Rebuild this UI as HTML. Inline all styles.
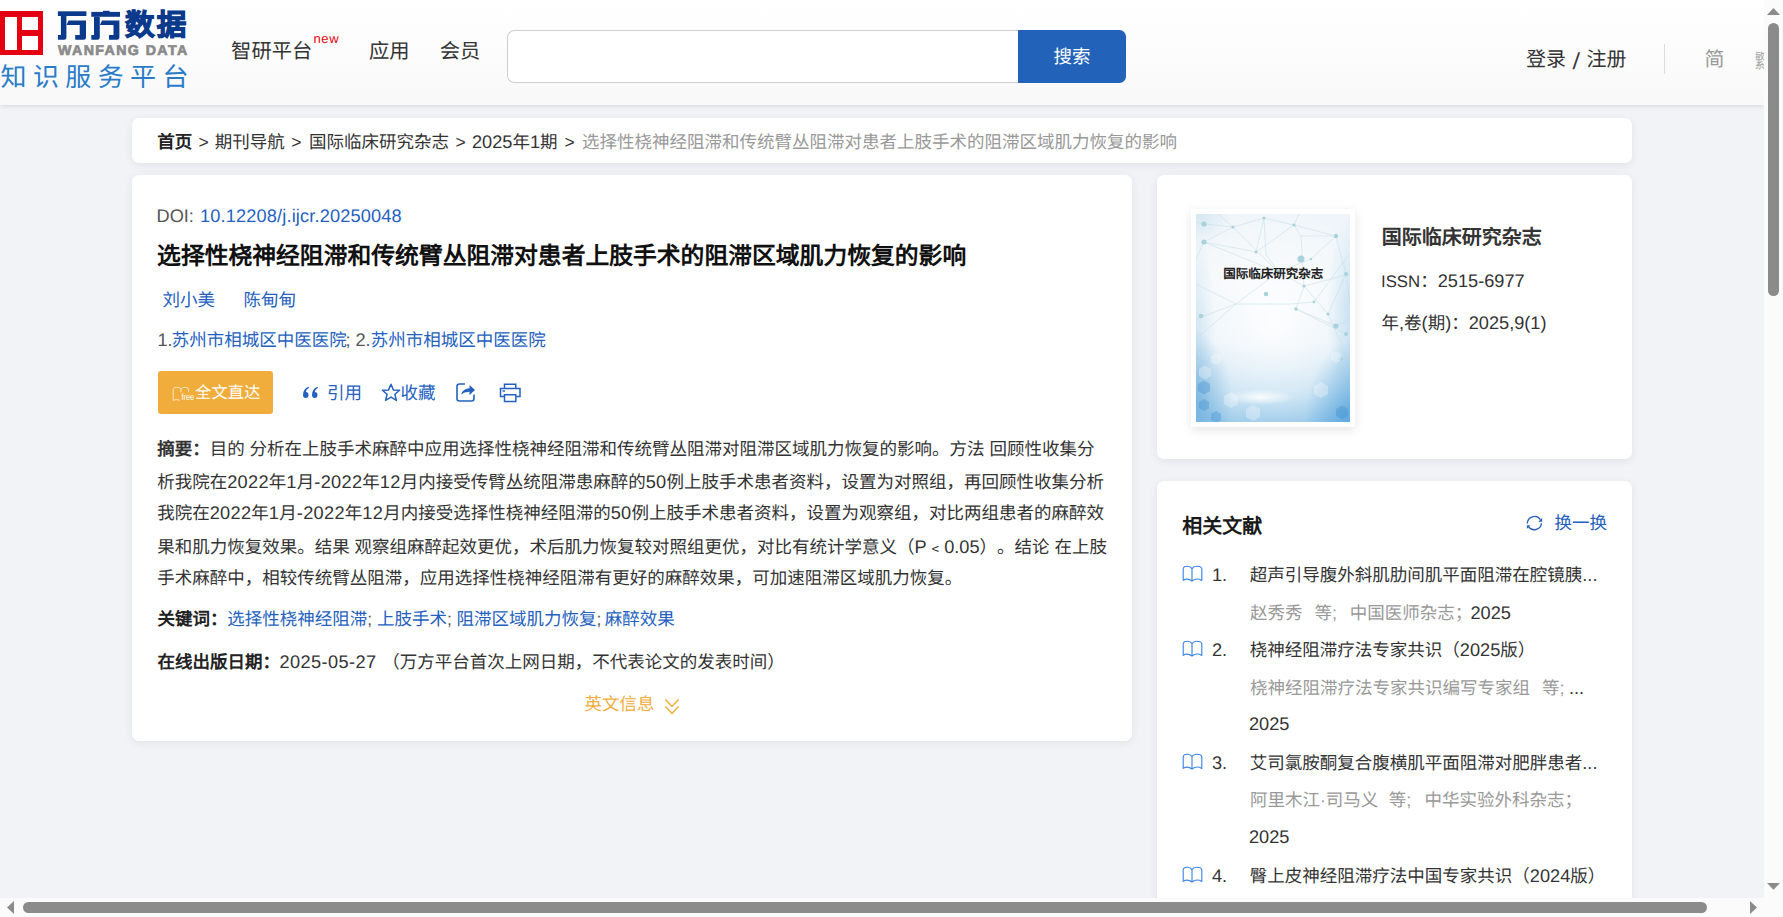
<!DOCTYPE html>
<html lang="zh-CN"><head><meta charset="utf-8"><title>万方数据</title>
<style>
*{margin:0;padding:0;box-sizing:border-box}
html,body{width:1783px;height:917px;overflow:hidden;background:#fafafa}
body{font-family:"Liberation Sans",sans-serif;color:#333;position:relative;text-rendering:geometricPrecision;text-spacing-trim:space-all}
.ab{position:absolute;white-space:nowrap}
.l{font-size:1.04em}
.d{font-size:1.04em;letter-spacing:0.3px}
#vp{position:absolute;left:0;top:0;width:1764px;height:898px;overflow:hidden;background:#f2f3f6}
#hdr{position:absolute;left:0;top:0;width:1764px;height:105px;background:linear-gradient(#ffffff 0%,#fcfcfc 50%,#f8f8f8 100%);box-shadow:0 1px 5px rgba(0,0,0,.12)}
.card{position:absolute;background:#fff;border-radius:7px;box-shadow:0 2px 10px rgba(0,0,0,.07)}
.blue{color:#2461c0}
.gray{color:#999}
</style></head><body>
<div id="vp">
<div id="hdr">
<div class="ab" style="left:0;top:11.2px;width:43.2px;height:43.8px;background:#e50011"></div>
<div class="ab" style="left:5px;top:16.8px;width:12.4px;height:33.1px;background:#fff"></div>
<div class="ab" style="left:22.4px;top:16.8px;width:15.7px;height:13.5px;background:#fff"></div>
<div class="ab" style="left:22.4px;top:35.9px;width:15.7px;height:14px;background:#fff"></div>
</div>
<svg class="ab" style="left:55px;top:8px" width="70" height="36" viewBox="0 0 70 36"><g fill="#0b3a8c"><path d="M2.9 3.3 H31.4 V8 H2.9 Z"/><path d="M5.9 8 H11.4 V29.5 Q11.4 31.8 9 31.8 H2.9 V27.1 H5.9 Z"/><path d="M13.6 12.6 H31 V29.5 Q31 31.8 28.6 31.8 H20.2 V27.1 H24.7 V16.9 H11.5 Z"/><path d="M36.3 3.9 H65 V8.8 H36.3 Z"/><path d="M47.9 2.8 H54.6 V4.5 H47.9 Z"/><path d="M39 8.8 H44.8 V29.5 Q44.8 31.8 42.4 31.8 H36.3 V27.1 H39 Z"/><path d="M47 12.6 H64.4 V29.5 Q64.4 31.8 62 31.8 H54 V27.1 H58.5 V16.9 H44.9 Z"/></g></svg>
<div class="ab" style="left:125.00px;top:4.20px;font-size:29.5px;line-height:44px;color:#0b3a8c;font-weight:900;letter-spacing:2.2px;-webkit-text-stroke:1.1px #0b3a8c">数据</div>
<div class="ab" style="left:58.00px;top:43.00px;font-size:14.2px;line-height:16px;color:#8a8a8a;font-weight:bold;letter-spacing:1.4px;-webkit-text-stroke:0.7px #8a8a8a">WANFANG DATA</div>
<div class="ab" style="left:0.50px;top:58.30px;font-size:26px;line-height:39px;color:#2a7cc8;font-weight:normal;letter-spacing:6.4px">知识服务平台</div>
<div class="ab" style="left:231.10px;top:36.50px;font-size:20.3px;line-height:30px;color:#333;font-weight:normal;">智研平台</div>
<div class="ab" style="left:313.50px;top:30.80px;font-size:13px;line-height:16px;color:#e60012;font-weight:normal;letter-spacing:0.6px">new</div>
<div class="ab" style="left:369.00px;top:36.50px;font-size:20.3px;line-height:30px;color:#333;font-weight:normal;">应用</div>
<div class="ab" style="left:439.70px;top:36.50px;font-size:20.3px;line-height:30px;color:#333;font-weight:normal;">会员</div>
<div class="ab" style="left:507px;top:30px;width:540px;height:53px;background:#fff;border:1px solid #cfcfcf;border-right:none;border-radius:7.5px 0 0 7.5px"></div>
<div class="ab" style="left:1018px;top:30px;width:108px;height:53px;background:#2362b9;border-radius:0 6.5px 6.5px 0"></div>
<div class="ab" style="left:1053.60px;top:43.20px;font-size:18.5px;line-height:28px;color:#fff;font-weight:normal;">搜索</div>
<div class="ab" style="left:1526.10px;top:45.30px;font-size:20px;line-height:30px;color:#333;font-weight:normal;">登录</div>
<div class="ab" style="left:1573.20px;top:44.20px;font-size:23px;line-height:34px;color:#333;font-weight:normal;transform:skewX(-4deg)">/</div>
<div class="ab" style="left:1586.40px;top:45.30px;font-size:20px;line-height:30px;color:#333;font-weight:normal;">注册</div>
<div class="ab" style="left:1664px;top:44px;width:1px;height:30px;background:#dcdcdc"></div>
<div class="ab" style="left:1704.50px;top:45.00px;font-size:20px;line-height:30px;color:#999;font-weight:normal;">简</div>
<div class="ab" style="left:1754.50px;top:46.50px;font-size:20px;line-height:30px;color:#aaa;font-weight:normal;transform:scaleX(0.5);transform-origin:0 0">繁</div>
<div class="card" style="left:132px;top:118px;width:1500px;height:44.7px"></div>
<div class="ab" style="left:157.20px;top:128.50px;font-size:17.5px;line-height:26px;color:#222;font-weight:bold;">首页</div>
<div class="ab" style="left:198.50px;top:128.50px;font-size:17.5px;line-height:26px;color:#333;font-weight:normal;">&gt;</div>
<div class="ab" style="left:291.20px;top:128.50px;font-size:17.5px;line-height:26px;color:#333;font-weight:normal;">&gt;</div>
<div class="ab" style="left:455.50px;top:128.50px;font-size:17.5px;line-height:26px;color:#333;font-weight:normal;">&gt;</div>
<div class="ab" style="left:564.50px;top:128.50px;font-size:17.5px;line-height:26px;color:#333;font-weight:normal;">&gt;</div>
<div class="ab" style="left:214.80px;top:128.50px;font-size:17.5px;line-height:26px;color:#333;font-weight:normal;">期刊导航</div>
<div class="ab" style="left:309.10px;top:128.50px;font-size:17.5px;line-height:26px;color:#333;font-weight:normal;">国际临床研究杂志</div>
<div class="ab" style="left:472.00px;top:128.50px;font-size:17.5px;line-height:26px;color:#333;font-weight:normal;"><span class="l">2025</span>年<span class="l">1</span>期</div>
<div class="ab" style="left:582.00px;top:128.50px;font-size:17.5px;line-height:26px;color:#999;font-weight:normal;">选择性桡神经阻滞和传统臂丛阻滞对患者上肢手术的阻滞区域肌力恢复的影响</div>
<div class="card" style="left:132px;top:175px;width:1000.3px;height:566px"></div>
<div class="ab" style="left:156.50px;top:202.50px;font-size:17.5px;line-height:26px;color:#555;font-weight:normal;"><span class="l">DOI:</span></div>
<div class="ab" style="left:200.00px;top:202.50px;font-size:17.5px;line-height:26px;color:#2461c0;font-weight:normal;"><span class="l" style="letter-spacing:0.15px">10.12208/j.ijcr.20250048</span></div>
<div class="ab" style="left:157.10px;top:239.00px;font-size:23.8px;line-height:36px;color:#111;font-weight:bold;">选择性桡神经阻滞和传统臂丛阻滞对患者上肢手术的阻滞区域肌力恢复的影响</div>
<div class="ab" style="left:162.40px;top:286.50px;font-size:17.5px;line-height:26px;color:#2461c0;font-weight:normal;">刘小美</div>
<div class="ab" style="left:243.60px;top:286.50px;font-size:17.5px;line-height:26px;color:#2461c0;font-weight:normal;">陈甸甸</div>
<div class="ab" style="left:157.50px;top:327.00px;font-size:17.5px;line-height:26px;color:#555;font-weight:normal;"><span class="l">1.</span></div>
<div class="ab" style="left:171.70px;top:327.00px;font-size:17.5px;line-height:26px;color:#2461c0;font-weight:normal;">苏州市相城区中医医院</div>
<div class="ab" style="left:345.50px;top:327.00px;font-size:17.5px;line-height:26px;color:#555;font-weight:normal;"><span class="l">;</span></div>
<div class="ab" style="left:355.50px;top:327.00px;font-size:17.5px;line-height:26px;color:#555;font-weight:normal;"><span class="l">2.</span></div>
<div class="ab" style="left:370.70px;top:327.00px;font-size:17.5px;line-height:26px;color:#2461c0;font-weight:normal;">苏州市相城区中医医院</div>
<div class="ab" style="left:158.3px;top:371.1px;width:114.4px;height:42.6px;background:#f0ad3b;border-radius:3px"></div>
<div class="ab" style="left:195.10px;top:381.20px;font-size:16.3px;line-height:24px;color:#fff;font-weight:normal;">全文直达</div>
<div class="ab" style="left:327.10px;top:379.60px;font-size:17.5px;line-height:26px;color:#2461c0;font-weight:normal;">引用</div>
<div class="ab" style="left:400.40px;top:379.60px;font-size:17.5px;line-height:26px;color:#2461c0;font-weight:normal;">收藏</div>
<div class="ab" style="left:157.20px;top:435.80px;font-size:17.5px;line-height:26px;color:#333;font-weight:normal;"><b>摘要：</b>目的 分析在上肢手术麻醉中应用选择性桡神经阻滞和传统臂丛阻滞对阻滞区域肌力恢复的影响。方法 回顾性收集分</div>
<div class="ab" style="left:157.20px;top:468.50px;font-size:17.5px;line-height:26px;color:#333;font-weight:normal;">析我院在<span class="d">2022</span>年<span class="d">1</span>月<span class="d">-2022</span>年<span class="d">12</span>月内接受传臂丛统阻滞患麻醉的<span class="d">50</span>例上肢手术患者资料，设置为对照组，再回顾性收集分析</div>
<div class="ab" style="left:157.20px;top:499.90px;font-size:17.5px;line-height:26px;color:#333;font-weight:normal;">我院在<span class="d">2022</span>年<span class="d">1</span>月<span class="d">-2022</span>年<span class="d">12</span>月内接受选择性桡神经阻滞的<span class="d">50</span>例上肢手术患者资料，设置为观察组，对比两组患者的麻醉效</div>
<div class="ab" style="left:157.20px;top:533.80px;font-size:17.5px;line-height:26px;color:#333;font-weight:normal;">果和肌力恢复效果。结果 观察组麻醉起效更优，术后肌力恢复较对照组更优，对比有统计学意义（<span class="l">P</span>﹤<span class="l">0.05</span>）。结论 在上肢</div>
<div class="ab" style="left:157.20px;top:565.10px;font-size:17.5px;line-height:26px;color:#333;font-weight:normal;">手术麻醉中，相较传统臂丛阻滞，应用选择性桡神经阻滞有更好的麻醉效果，可加速阻滞区域肌力恢复。</div>
<div class="ab" style="left:157.40px;top:605.90px;font-size:17.5px;line-height:26px;color:#222;font-weight:normal;"><b>关键词：</b></div>
<div class="ab" style="left:227.20px;top:605.90px;font-size:17.5px;line-height:26px;color:#2461c0;font-weight:normal;">选择性桡神经阻滞<span style="color:#555">;</span></div>
<div class="ab" style="left:377.00px;top:605.90px;font-size:17.5px;line-height:26px;color:#2461c0;font-weight:normal;">上肢手术<span style="color:#555">;</span></div>
<div class="ab" style="left:456.50px;top:605.90px;font-size:17.5px;line-height:26px;color:#2461c0;font-weight:normal;">阻滞区域肌力恢复<span style="color:#555">;</span></div>
<div class="ab" style="left:604.80px;top:605.90px;font-size:17.5px;line-height:26px;color:#2461c0;font-weight:normal;">麻醉效果</div>
<div class="ab" style="left:157.40px;top:648.80px;font-size:17.5px;line-height:26px;color:#222;font-weight:normal;"><b>在线出版日期：</b></div>
<div class="ab" style="left:279.50px;top:648.80px;font-size:17.5px;line-height:26px;color:#333;font-weight:normal;"><span class="l" style="letter-spacing:0.4px">2025-05-27</span></div>
<div class="ab" style="left:377.50px;top:648.80px;font-size:17.5px;line-height:26px;color:#333;font-weight:normal;">&nbsp;（万方平台首次上网日期，不代表论文的发表时间）</div>
<div class="ab" style="left:584.40px;top:691.10px;font-size:17.5px;line-height:26px;color:#f0ad3b;font-weight:normal;">英文信息</div>
<div class="card" style="left:1156.7px;top:175px;width:475.3px;height:284.3px"></div>
<div class="ab" style="left:1191px;top:208.6px;width:164.4px;height:218.2px;background:#fff;box-shadow:0 3px 10px rgba(0,0,0,.10)"></div>
<div class="ab" style="left:1196.4px;top:213.5px;width:154.1px;height:208.4px;overflow:hidden;background:
radial-gradient(ellipse 35px 8px at 42% 88%, rgba(255,255,255,.9), rgba(255,255,255,0)),
radial-gradient(ellipse 55px 90px at 106% 102%, rgba(60,150,215,.75), rgba(60,150,215,0)),
radial-gradient(ellipse 45px 70px at -6% 88%, rgba(70,150,210,.62), rgba(70,150,210,0)),
radial-gradient(ellipse 35px 30px at 0% 0%, rgba(160,205,225,.35), rgba(160,205,225,0)),
radial-gradient(ellipse 26px 100px at 102% 48%, rgba(140,195,230,.45), rgba(140,195,230,0)),
radial-gradient(ellipse 22px 100px at -2% 55%, rgba(150,200,230,.38), rgba(150,200,230,0)),
radial-gradient(ellipse 110px 120px at 50% 52%, rgba(255,255,255,.85), rgba(255,255,255,0)),
linear-gradient(#eff5fa 0%,#f3f7fa 35%,#e6f0f8 62%,#bddcf0 86%,#95c7e9 100%)">
<svg width="154" height="209" style="position:absolute;left:0;top:0" viewBox="0 0 154 209">
<g stroke="#bfdde3" stroke-width="0.55" fill="none" opacity="0.85">
<path d="M0 8 L8 10 L37 13 L68 4 L98 11 L140 22 L150 60 L132 100 L150 140"/>
<path d="M8 28 L37 13 L82 58 L108 72 L132 100 M118 88 L146 50 M146 50 L154 40"/>
<path d="M8 28 L82 58 L40 90 L0 105 M60 38 L98 11 L105 22 L140 22 M68 4 L60 38 L8 28"/>
<path d="M82 58 L70 40 L68 4 M105 22 L108 72 L100 95 L150 120 M100 95 L140 112 L154 105"/>
<path d="M0 70 L40 90 L95 90 L118 88 M8 28 L0 45 M150 60 L154 90 M37 13 L20 -2 M98 11 L104 -2"/>
<path d="M82 58 L115 45 L140 22 M0 125 L40 90 M108 72 L154 60"/>
</g>
<g fill="#a9d2db">
<circle cx="8" cy="10" r="2.6"/><circle cx="37" cy="13" r="1.6"/><circle cx="68" cy="4" r="1.6"/><circle cx="98" cy="11" r="1.6"/>
<circle cx="140" cy="22" r="2.2"/><circle cx="8" cy="28" r="2.6"/><circle cx="82" cy="58" r="2"/><circle cx="105" cy="45" r="3.5"/>
<circle cx="108" cy="72" r="1.6"/><circle cx="132" cy="100" r="1.6"/><circle cx="150" cy="60" r="2.1"/><circle cx="70" cy="80" r="2.2"/>
<circle cx="100" cy="95" r="1.8"/><circle cx="118" cy="88" r="1.4"/><circle cx="150" cy="120" r="2"/><circle cx="5" cy="102" r="2.3"/>
<circle cx="140" cy="112" r="2.6"/><circle cx="145" cy="145" r="1.8"/><circle cx="60" cy="38" r="1.5"/><circle cx="115" cy="45" r="1.2"/>
</g>
<g fill="#ffffff" opacity="0.3">
<path d="M3 155 l6 -3.5 6 3.5 0 7 -6 3.5 -6 -3.5z"/><path d="M15 142 l5 -3 5 3 0 6 -5 3 -5 -3z"/>
<path d="M28 182 l7 -4 7 4 0 8 -7 4 -7 -4z"/><path d="M118 172 l7 -4 7 4 0 8 -7 4 -7 -4z"/>
<path d="M50 195 l7 -4 7 4 0 8 -7 4 -7 -4z"/><path d="M135 140 l5 -3 5 3 0 6 -5 3 -5 -3z"/>
</g>
<g fill="#2f86cc" opacity="0.3">
<path d="M2 170 l6 -3.5 6 3.5 0 7 -6 3.5 -6 -3.5z"/><path d="M3 188 l5 -3 5 3 0 6 -5 3 -5 -3z"/>
<path d="M140 195 l6 -3.5 6 3.5 0 7 -6 3.5 -6 -3.5z"/><path d="M15 200 l5 -3 5 3 0 6 -5 3 -5 -3z"/>
</g>
</svg>
<div class="ab" style="left:26.8px;top:51px;font-size:12.5px;line-height:18px;font-weight:bold;color:#222">国际临床研究杂志</div>
</div>
<div class="ab" style="left:1381.80px;top:223.00px;font-size:20px;line-height:30px;color:#333;font-weight:bold;">国际临床研究杂志</div>
<div class="ab" style="left:1381.00px;top:268.10px;font-size:17.5px;line-height:26px;color:#333;font-weight:normal;"><span class="l" style="font-size:0.96em">ISSN</span>：<span class="l">2515-6977</span></div>
<div class="ab" style="left:1381.50px;top:310.30px;font-size:17.5px;line-height:26px;color:#333;font-weight:normal;">年<span class="l">,</span>卷<span class="l">(</span>期<span class="l">)</span>：<span class="l">2025,9(1)</span></div>
<div class="card" style="left:1156.7px;top:481px;width:475.3px;height:480px"></div>
<div class="ab" style="left:1182.30px;top:511.60px;font-size:20px;line-height:30px;color:#1a1a1a;font-weight:bold;">相关文献</div>
<div class="ab" style="left:1554.40px;top:510.40px;font-size:17.5px;line-height:26px;color:#2461c0;font-weight:normal;">换一换</div>
<svg class="ab" style="left:1182px;top:565.00px" width="22" height="18" viewBox="0 0 22 18"><path d="M1.2 15.4 L1.2 4 Q1.2 1.2 5.5 1.2 Q8.6 1.2 10 3.6 Q11.4 1.2 14.5 1.2 Q19.8 1.2 19.8 4 L19.8 15.4 Q14.5 12.4 10 16 Q5.5 12.4 1.2 15.4 Z M10 3.6 L10 16" fill="none" stroke="#3d85e3" stroke-width="1.15" stroke-linejoin="round"/></svg>
<div class="ab" style="left:1212.00px;top:561.80px;font-size:17.5px;line-height:26px;color:#333;font-weight:normal;"><span class="l">1.</span></div>
<div class="ab" style="left:1249.80px;top:561.80px;font-size:17.5px;line-height:26px;color:#333;font-weight:normal;">超声引导腹外斜肌肋间肌平面阻滞在腔镜胰<span class="l">...</span></div>
<svg class="ab" style="left:1182px;top:639.80px" width="22" height="18" viewBox="0 0 22 18"><path d="M1.2 15.4 L1.2 4 Q1.2 1.2 5.5 1.2 Q8.6 1.2 10 3.6 Q11.4 1.2 14.5 1.2 Q19.8 1.2 19.8 4 L19.8 15.4 Q14.5 12.4 10 16 Q5.5 12.4 1.2 15.4 Z M10 3.6 L10 16" fill="none" stroke="#3d85e3" stroke-width="1.15" stroke-linejoin="round"/></svg>
<div class="ab" style="left:1212.00px;top:636.60px;font-size:17.5px;line-height:26px;color:#333;font-weight:normal;"><span class="l">2.</span></div>
<div class="ab" style="left:1249.80px;top:636.60px;font-size:17.5px;line-height:26px;color:#333;font-weight:normal;">桡神经阻滞疗法专家共识（<span class="l">2025</span>版）</div>
<svg class="ab" style="left:1182px;top:753.30px" width="22" height="18" viewBox="0 0 22 18"><path d="M1.2 15.4 L1.2 4 Q1.2 1.2 5.5 1.2 Q8.6 1.2 10 3.6 Q11.4 1.2 14.5 1.2 Q19.8 1.2 19.8 4 L19.8 15.4 Q14.5 12.4 10 16 Q5.5 12.4 1.2 15.4 Z M10 3.6 L10 16" fill="none" stroke="#3d85e3" stroke-width="1.15" stroke-linejoin="round"/></svg>
<div class="ab" style="left:1212.00px;top:750.10px;font-size:17.5px;line-height:26px;color:#333;font-weight:normal;"><span class="l">3.</span></div>
<div class="ab" style="left:1249.80px;top:750.10px;font-size:17.5px;line-height:26px;color:#333;font-weight:normal;">艾司氯胺酮复合腹横肌平面阻滞对肥胖患者<span class="l">...</span></div>
<svg class="ab" style="left:1182px;top:866.00px" width="22" height="18" viewBox="0 0 22 18"><path d="M1.2 15.4 L1.2 4 Q1.2 1.2 5.5 1.2 Q8.6 1.2 10 3.6 Q11.4 1.2 14.5 1.2 Q19.8 1.2 19.8 4 L19.8 15.4 Q14.5 12.4 10 16 Q5.5 12.4 1.2 15.4 Z M10 3.6 L10 16" fill="none" stroke="#3d85e3" stroke-width="1.15" stroke-linejoin="round"/></svg>
<div class="ab" style="left:1212.00px;top:862.80px;font-size:17.5px;line-height:26px;color:#333;font-weight:normal;"><span class="l">4.</span></div>
<div class="ab" style="left:1249.80px;top:862.80px;font-size:17.5px;line-height:26px;color:#333;font-weight:normal;">臀上皮神经阻滞疗法中国专家共识（<span class="l">2024</span>版）</div>
<div class="ab" style="left:1250.00px;top:599.90px;font-size:17.5px;line-height:26px;color:#999;font-weight:normal;">赵秀秀</div>
<div class="ab" style="left:1314.40px;top:599.90px;font-size:17.5px;line-height:26px;color:#999;font-weight:normal;">等<span class="l">;</span></div>
<div class="ab" style="left:1349.80px;top:599.90px;font-size:17.5px;line-height:26px;color:#999;font-weight:normal;">中国医师杂志；</div>
<div class="ab" style="left:1470.50px;top:599.90px;font-size:17.5px;line-height:26px;color:#333;font-weight:normal;"><span class="l">2025</span></div>
<div class="ab" style="left:1250.00px;top:674.60px;font-size:17.5px;line-height:26px;color:#999;font-weight:normal;">桡神经阻滞疗法专家共识编写专家组</div>
<div class="ab" style="left:1542.10px;top:674.60px;font-size:17.5px;line-height:26px;color:#999;font-weight:normal;">等<span class="l">;</span></div>
<div class="ab" style="left:1569.00px;top:674.60px;font-size:17.5px;line-height:26px;color:#333;font-weight:normal;"><span class="l">...</span></div>
<div class="ab" style="left:1249.00px;top:711.00px;font-size:17.5px;line-height:26px;color:#333;font-weight:normal;"><span class="l">2025</span></div>
<div class="ab" style="left:1250.00px;top:786.90px;font-size:17.5px;line-height:26px;color:#999;font-weight:normal;">阿里木江·司马义</div>
<div class="ab" style="left:1388.70px;top:786.90px;font-size:17.5px;line-height:26px;color:#999;font-weight:normal;">等<span class="l">;</span></div>
<div class="ab" style="left:1424.40px;top:786.90px;font-size:17.5px;line-height:26px;color:#999;font-weight:normal;">中华实验外科杂志；</div>
<div class="ab" style="left:1249.00px;top:823.80px;font-size:17.5px;line-height:26px;color:#333;font-weight:normal;"><span class="l">2025</span></div>
<svg class="ab" style="left:172px;top:386px" width="24" height="16" viewBox="0 0 24 16"><path d="M1.2 14.3 L1.2 3.5 Q1.2 1.3 4.8 1.3 Q7.6 1.3 8.9 3 Q10.2 1.3 13 1.3 Q16.6 1.3 16.6 3.5 L16.6 6.3 M8.9 3 L8.9 6.5 M1.2 14.3 Q4.5 12.8 7.8 14.3" fill="none" stroke="#fdebcc" stroke-width="0.9"/><text x="9.4" y="14" font-size="9" fill="#fff" font-family="Liberation Sans" textLength="12.9" lengthAdjust="spacingAndGlyphs">free</text></svg>
<svg class="ab" style="left:302px;top:386px" width="18" height="14" viewBox="0 0 18 14"><g fill="#2461c0"><path d="M1 9 Q1 3 6.5 0.8 L7 1.8 Q4 3.5 3.8 6 Q6.5 6 6.5 9 Q6.5 12 3.8 12 Q1 12 1 9 Z"/><path d="M10 9 Q10 3 15.5 0.8 L16 1.8 Q13 3.5 12.8 6 Q15.5 6 15.5 9 Q15.5 12 12.8 12 Q10 12 10 9 Z"/></g></svg>
<svg class="ab" style="left:381px;top:383px" width="20" height="19" viewBox="0 0 20 19"><path d="M10 1.2 L12.4 6.9 L18.6 7.3 L13.9 11.3 L15.4 17.4 L10 14.1 L4.6 17.4 L6.1 11.3 L1.4 7.3 L7.6 6.9 Z" fill="none" stroke="#2461c0" stroke-width="1.5" stroke-linejoin="round"/></svg>
<svg class="ab" style="left:455px;top:382px" width="21" height="21" viewBox="0 0 21 21"><path d="M10 2 L4.5 2 Q2 2 2 4.5 L2 16.5 Q2 19 4.5 19 L16.5 19 Q19 19 19 16.5 L19 12.5" fill="none" stroke="#2461c0" stroke-width="1.6"/><path d="M6 12.5 Q8 6.5 14.5 6.3 L14.5 3 L20 8 L14.5 13 L14.5 9.7 Q9.5 9.5 6 12.5 Z" fill="#2461c0"/></svg>
<svg class="ab" style="left:499px;top:383px" width="23" height="20" viewBox="0 0 23 20"><g fill="none" stroke="#2461c0" stroke-width="1.5"><path d="M5.5 5.5 L5.5 1.2 L16.8 1.2 L16.8 5.5"/><path d="M5 13.6 L1.5 13.6 L1.5 5.5 L21 5.5 L21 13.6 L17.3 13.6"/><path d="M5.5 11.8 L16.8 11.8 L16.8 18.5 L5.5 18.5 Z"/></g><rect x="3.5" y="7.3" width="2.5" height="1.4" fill="#2461c0"/></svg>
<svg class="ab" style="left:1520px;top:510px" width="30" height="28" viewBox="0 0 30 28"><g fill="none" stroke="#2a5fb8" stroke-width="1.35"><path d="M7.3 13.6 A7.2 7.2 0 0 1 20.4 9.6"/><path d="M21.5 13.3 A7.2 7.2 0 0 1 8.4 16.6"/></g><g fill="#2a5fb8"><path d="M22.1 7.9 L22.1 11.7 L18.2 11.7 Z"/><path d="M6.9 15.2 L10.5 15.2 L6.9 18.8 Z"/></g></svg>
<svg class="ab" style="left:664px;top:698px" width="17" height="17" viewBox="0 0 17 17"><g fill="none" stroke="#f0ad3b" stroke-width="1.5"><path d="M1.5 1.5 L8 8.5 L14.5 1.5"/><path d="M1.5 8.5 L8 15.5 L14.5 8.5"/></g></svg>
</div>
<div class="ab" style="left:1764px;top:0;width:19px;height:917px;background:#fbfbfb"></div>
<div class="ab" style="left:0;top:898px;width:1764px;height:19px;background:#fbfbfb"></div>
<div class="ab" style="left:1768px;top:23px;width:11px;height:273px;background:#8b8b8b;border-radius:5.5px"></div>
<div class="ab" style="left:23px;top:902px;width:1684px;height:11px;background:#8b8b8b;border-radius:5.5px"></div>
<svg class="ab" style="left:0;top:0" width="1783" height="917"><g fill="#8b8b8b"><path d="M1767 14.9 L1780 14.9 L1773.5 7.9 Z"/><path d="M1767 883.1 L1780 883.1 L1773.5 889.8 Z"/><path d="M14 901 L14 914 L7 907.5 Z"/><path d="M1750 901 L1750 914 L1757 907.5 Z"/></g></svg>
</body></html>
